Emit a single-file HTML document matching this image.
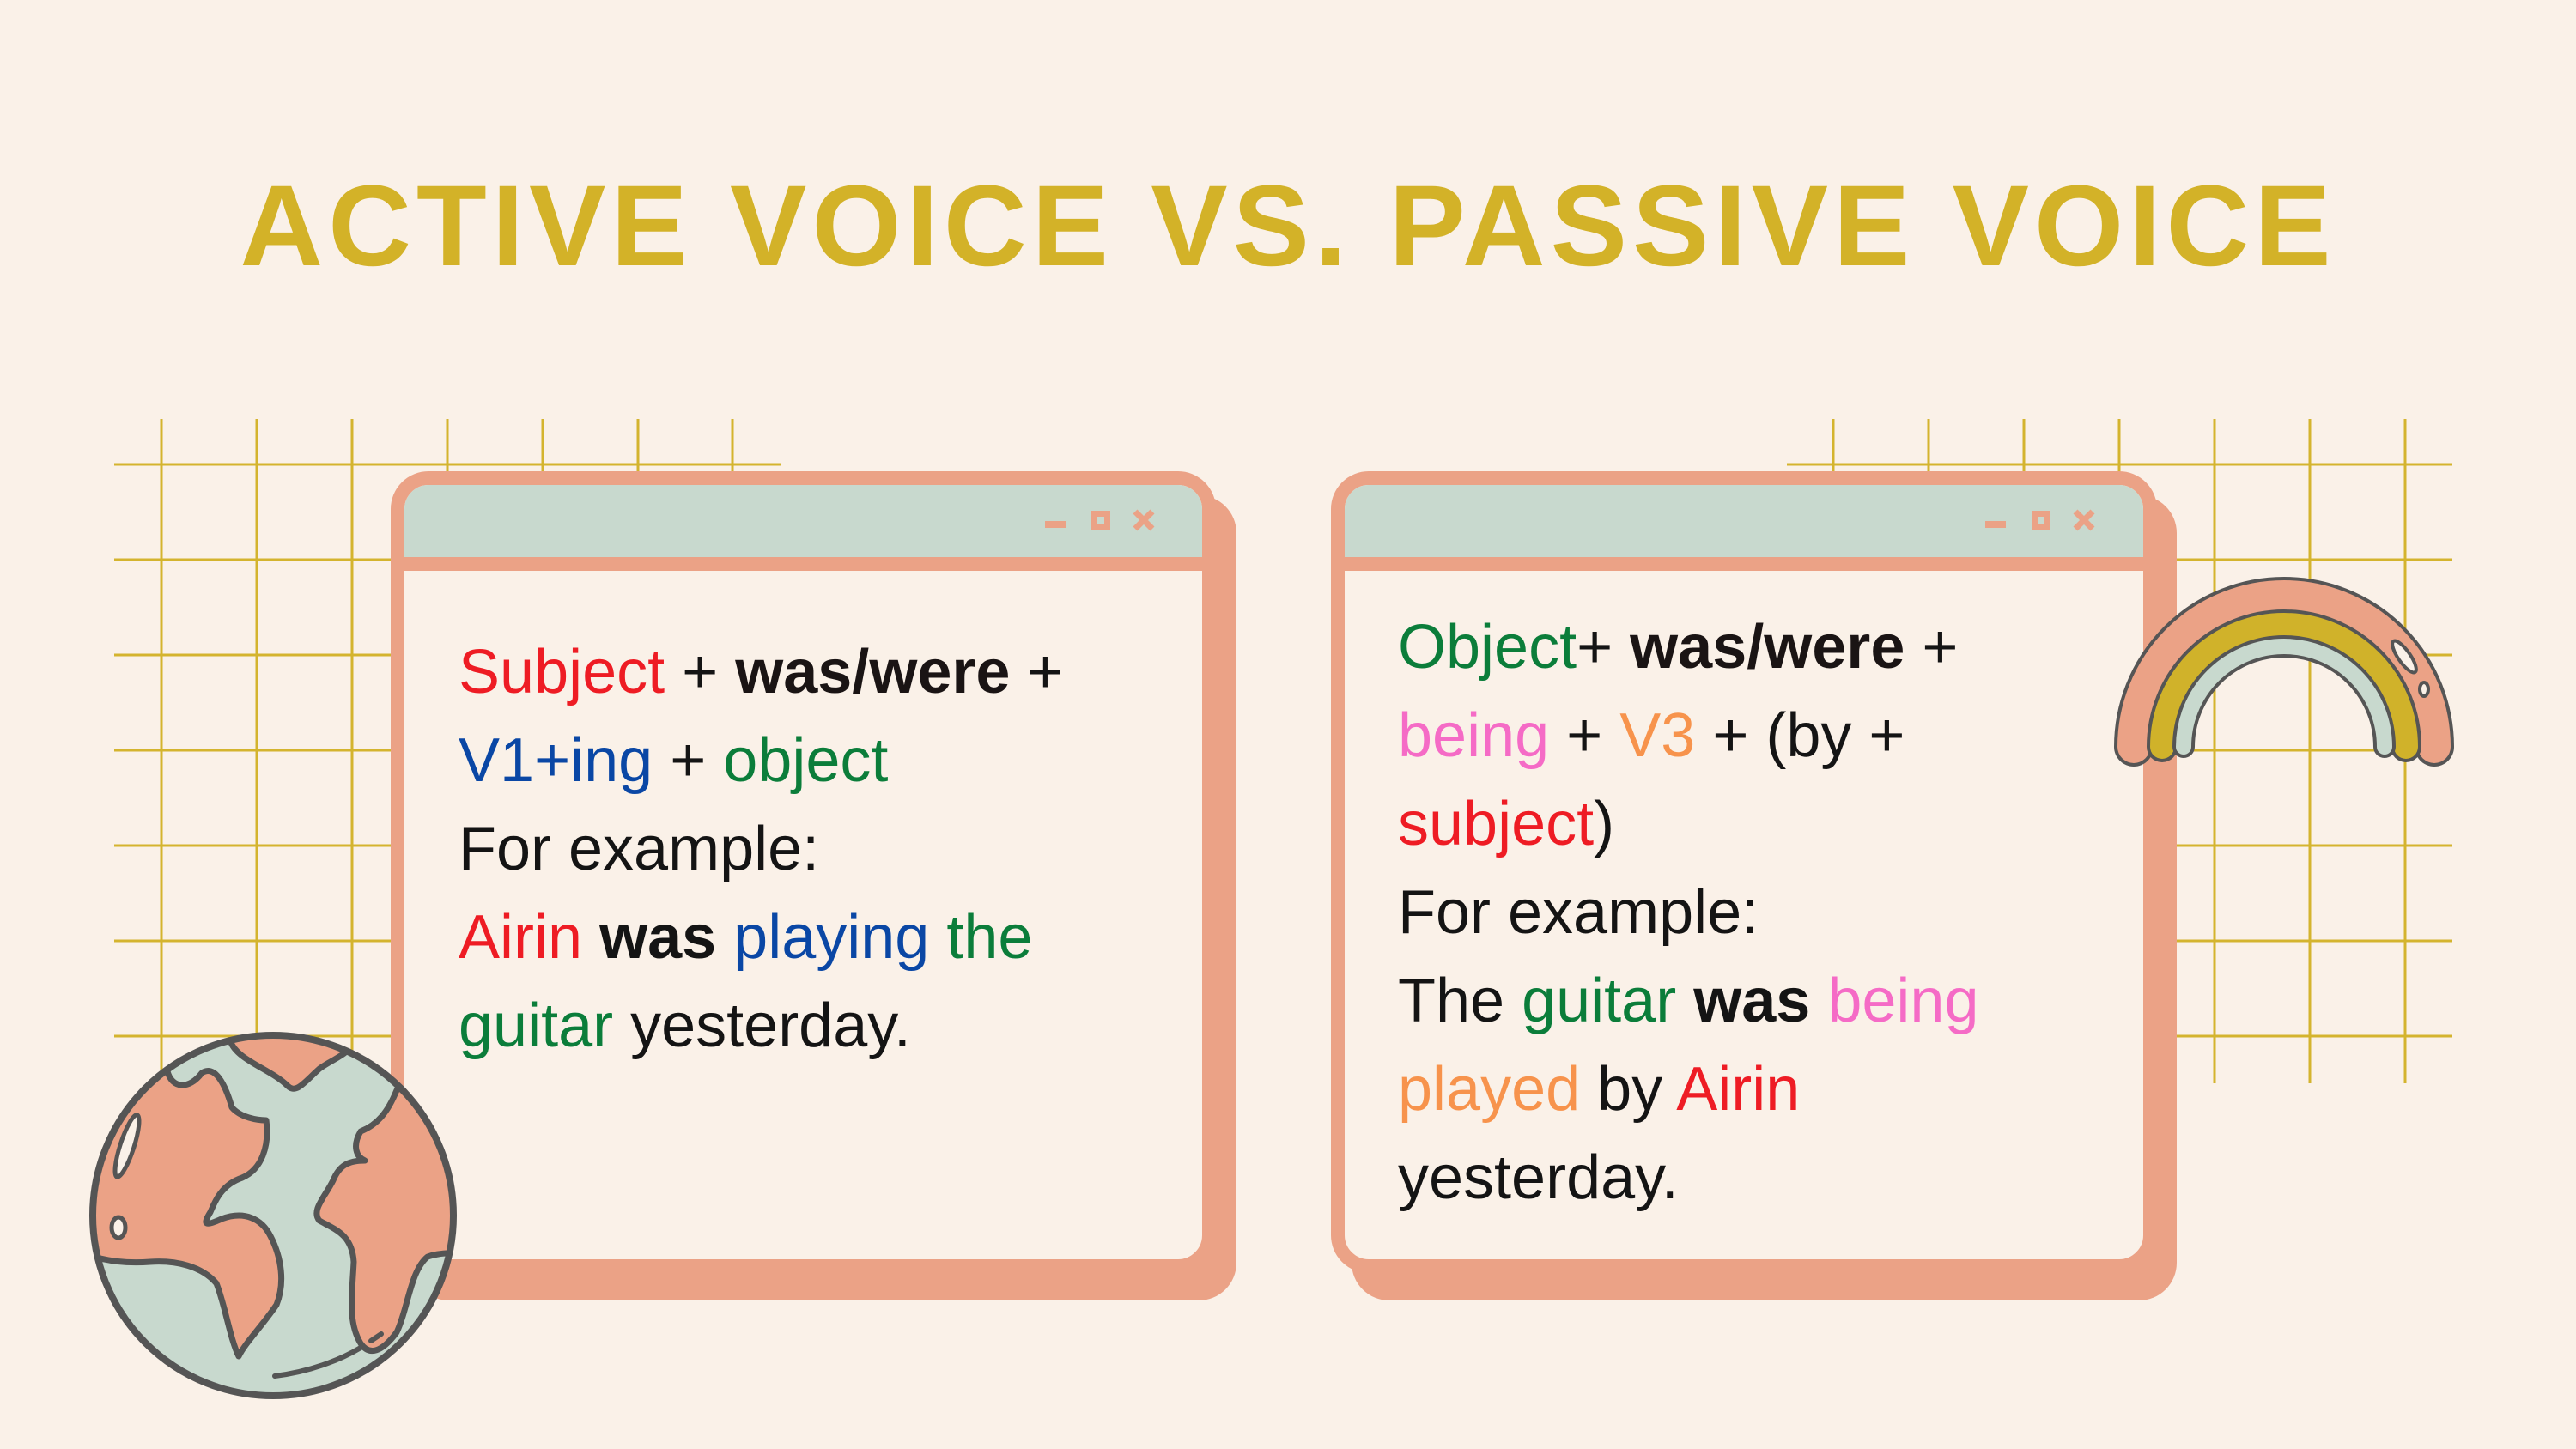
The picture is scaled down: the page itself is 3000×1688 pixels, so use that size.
<!DOCTYPE html>
<html><head><meta charset="utf-8"><style>
*{margin:0;padding:0;box-sizing:border-box}
body{width:3000px;height:1688px;background:#FAF1E8;position:relative;overflow:hidden;font-family:"Liberation Sans",sans-serif}
.title{position:absolute;left:0;width:3000px;top:194px;text-align:center;font-weight:bold;font-size:134px;letter-spacing:6px;color:#D3B228;line-height:140px}
.sh{position:absolute;background:#EBA286;border-radius:44px}
.win{position:absolute;background:#FAF1E8;border:16px solid #EBA286;border-radius:44px;overflow:hidden}
.bar{height:84px;background:#C8D9CE;border-bottom:16px solid #EBA286;position:relative;box-sizing:content-box}
.txt{position:absolute;font-size:72px;line-height:103px;color:#141414;white-space:nowrap}
.r{color:#EE1C24}.b{color:#0A47A5}.g{color:#0B7D3A}.p{color:#F56BC6}.o{color:#F7934C}.k{font-weight:bold;color:#1a1414}
</style></head><body>
<svg width="3000" height="1688" style="position:absolute;left:0;top:0">
<g stroke="#D4B42E" stroke-width="3">
<line x1="188" y1="488" x2="188" y2="1262"/><line x1="299" y1="488" x2="299" y2="1262"/><line x1="410" y1="488" x2="410" y2="1262"/><line x1="521" y1="488" x2="521" y2="560"/><line x1="632" y1="488" x2="632" y2="560"/><line x1="743" y1="488" x2="743" y2="560"/><line x1="853" y1="488" x2="853" y2="560"/>
<line x1="133" y1="541" x2="909" y2="541"/><line x1="133" y1="652" x2="460" y2="652"/><line x1="133" y1="763" x2="460" y2="763"/><line x1="133" y1="874" x2="460" y2="874"/><line x1="133" y1="985" x2="460" y2="985"/><line x1="133" y1="1096" x2="460" y2="1096"/><line x1="133" y1="1207" x2="460" y2="1207"/>
<line x1="2135" y1="488" x2="2135" y2="560"/><line x1="2246" y1="488" x2="2246" y2="560"/><line x1="2357" y1="488" x2="2357" y2="560"/><line x1="2468" y1="488" x2="2468" y2="560"/><line x1="2579" y1="488" x2="2579" y2="1262"/><line x1="2690" y1="488" x2="2690" y2="1262"/><line x1="2801" y1="488" x2="2801" y2="1262"/>
<line x1="2081" y1="541" x2="2856" y2="541"/><line x1="2520" y1="652" x2="2856" y2="652"/><line x1="2520" y1="763" x2="2856" y2="763"/><line x1="2520" y1="874" x2="2856" y2="874"/><line x1="2520" y1="985" x2="2856" y2="985"/><line x1="2520" y1="1096" x2="2856" y2="1096"/><line x1="2520" y1="1207" x2="2856" y2="1207"/>
</g></svg>
<div class="title">ACTIVE VOICE VS. PASSIVE VOICE</div>

<div class="sh" style="left:479px;top:577px;width:961px;height:938px"></div>
<div class="win" style="left:455px;top:549px;width:961px;height:934px"><div class="bar">
<svg width="961" height="84" style="position:absolute;left:0;top:0"><g fill="#EBA286"><rect x="746" y="42" width="24" height="8"/><path d="M800 30h22v22h-22zM807 37v8h8v-8z" fill-rule="evenodd"/><path d="M851 31l20 20M871 31l-20 20" stroke="#EBA286" stroke-width="7"/></g></svg></div></div>
<div class="txt" style="left:534px;top:732px"><span class="r">Subject</span> + <span class="k">was/were</span> +<br><span class="b">V1+ing</span> + <span class="g">object</span><br>For example:<br><span class="r">Airin</span> <b>was</b> <span class="b">playing</span> <span class="g">the</span><br><span class="g">guitar</span> yesterday.</div>

<div class="sh" style="left:1574px;top:577px;width:961px;height:938px"></div>
<div class="win" style="left:1550px;top:549px;width:962px;height:934px"><div class="bar">
<svg width="962" height="84" style="position:absolute;left:0;top:0"><g fill="#EBA286"><rect x="746" y="42" width="24" height="8"/><path d="M800 30h22v22h-22zM807 37v8h8v-8z" fill-rule="evenodd"/><path d="M851 31l20 20M871 31l-20 20" stroke="#EBA286" stroke-width="7"/></g></svg></div></div>
<div class="txt" style="left:1628px;top:703px"><span class="g">Object</span>+ <span class="k">was/were</span> +<br><span class="p">being</span> + <span class="o">V3</span> + (by +<br><span class="r">subject</span>)<br>For example:<br>The <span class="g">guitar</span> <b>was</b> <span class="p">being</span><br><span class="o">played</span> by <span class="r">Airin</span><br>yesterday.</div>

<svg width="3000" height="1688" style="position:absolute;left:0;top:0">
<defs><clipPath id="gc"><circle cx="318" cy="1416" r="210"/></clipPath></defs>
<circle cx="318" cy="1416" r="210" fill="#C8D9CE"/>
<g clip-path="url(#gc)" fill="#EBA286" stroke="#555" stroke-width="7" stroke-linejoin="round">
<path d="M262 1190 L268 1212 C275 1235 315 1245 335 1265 C345 1275 355 1260 372 1245 C390 1232 405 1230 415 1210 L420 1180 Z"/>
<path d="M100 1240 L195 1248 C200 1268 220 1270 235 1250 C250 1240 262 1262 270 1290 C280 1302 300 1305 310 1305 C314 1335 305 1362 282 1372 C258 1380 250 1400 245 1412 C235 1428 240 1428 258 1420 C285 1410 305 1420 315 1440 C328 1465 332 1495 322 1520 C305 1545 285 1565 278 1580 C268 1560 262 1520 252 1495 C235 1475 205 1468 175 1470 C150 1472 125 1470 95 1460 Z"/>
<path d="M540 1230 L462 1270 C452 1295 440 1310 420 1318 C410 1335 415 1348 425 1352 C405 1352 395 1358 388 1375 C378 1395 362 1410 372 1422 C390 1432 410 1438 412 1470 C410 1510 405 1540 420 1565 C430 1580 445 1575 462 1552 C475 1525 478 1480 498 1464 C515 1458 525 1462 545 1455 Z"/>
</g>
<circle cx="318" cy="1416" r="210" fill="none" stroke="#555" stroke-width="8"/>
<ellipse cx="148" cy="1335" rx="8" ry="38" transform="rotate(18 148 1335)" fill="#FAF1E8" stroke="#555" stroke-width="5"/>
<ellipse cx="138" cy="1430" rx="8" ry="12" fill="#FAF1E8" stroke="#555" stroke-width="5"/>
<path d="M320 1603 C360 1598 395 1585 420 1570 M432 1562 L444 1554" fill="none" stroke="#555" stroke-width="6" stroke-linecap="round"/>

<g fill="none" stroke-linecap="round">
<path d="M2485 870 A175 175 0 0 1 2835 870" stroke="#555" stroke-width="46"/>
<path d="M2485 870 A175 175 0 0 1 2835 870" stroke="#EBA286" stroke-width="38"/>
<path d="M2518 870 A142 142 0 0 1 2802 870" stroke="#555" stroke-width="36"/>
<path d="M2518 870 A142 142 0 0 1 2802 870" stroke="#D0B22A" stroke-width="28"/>
<path d="M2543 870 A117 117 0 0 1 2777 870" stroke="#555" stroke-width="26"/>
<path d="M2543 870 A117 117 0 0 1 2777 870" stroke="#C8D9CE" stroke-width="18"/>
</g>
<ellipse cx="2800" cy="765" rx="7" ry="22" transform="rotate(-35 2800 765)" fill="#FAF1E8" stroke="#555" stroke-width="4"/>
<ellipse cx="2823" cy="803" rx="5" ry="8" fill="#FAF1E8" stroke="#555" stroke-width="4"/>
</svg>
</body></html>
